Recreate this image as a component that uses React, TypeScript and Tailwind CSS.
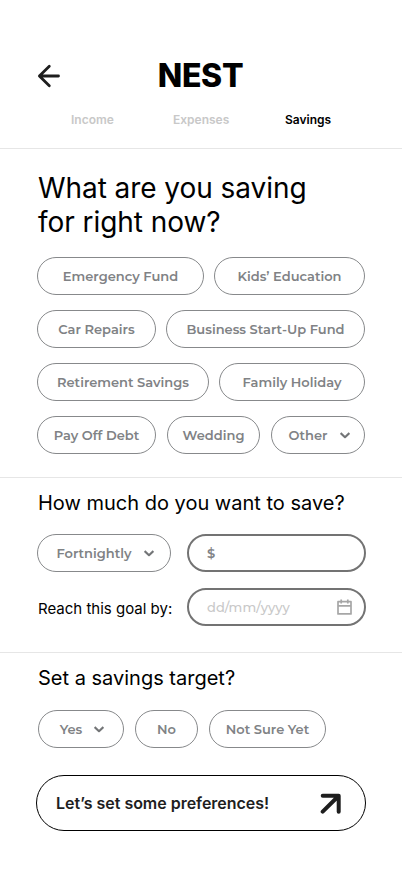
import { useState } from 'react'
import clsx from 'clsx'

type Option = {
  label: string
  className: string
  menu?: boolean
}

const goalRows: Option[][] = [
  [
    { label: 'Emergency Fund', className: 'w-[167px]' },
    { label: 'Kids’ Education', className: 'w-[151px]' },
  ],
  [
    { label: 'Car Repairs', className: 'w-[119px]' },
    { label: 'Business Start-Up Fund', className: 'w-[199px]' },
  ],
  [
    { label: 'Retirement Savings', className: 'w-[172px]' },
    { label: 'Family Holiday', className: 'w-[146px]' },
  ],
  [
    { label: 'Pay Off Debt', className: 'w-[119px]' },
    { label: 'Wedding', className: 'w-[93px]' },
    { label: 'Other', className: 'w-[94px]', menu: true },
  ],
]

const targetOptions: Option[] = [
  { label: 'Yes', className: 'w-[86px]', menu: true },
  { label: 'No', className: 'w-[63px]' },
  { label: 'Not Sure Yet', className: 'w-[117px]' },
]

function Chevron() {
  return (
    <svg width="10" height="7" viewBox="0 0 10 7" fill="none" stroke="#737577" strokeWidth="2.1">
      <path d="M0.6 1 5 5.2 9.4 1" strokeLinejoin="round" />
    </svg>
  )
}

function Pill({ option, selected, onClick }: { option: Option; selected?: boolean; onClick?: () => void }) {
  return (
    <button
      type="button"
      aria-pressed={selected}
      onClick={onClick}
      className={clsx(
        'flex h-[38px] shrink-0 items-center justify-center rounded-full border border-[#87898b] font-[Montserrat,Inter,sans-serif] text-[13px] font-semibold whitespace-nowrap text-[#808285]',
        option.menu && 'gap-3 pl-0.5',
        selected && 'bg-gray-100',
        option.className,
      )}
    >
      <span className="pt-px">{option.label}</span>
      {option.menu && <Chevron />}
    </button>
  )
}

export default function App() {
  const [goal, setGoal] = useState('')
  const [target, setTarget] = useState('')

  return (
    <div className="mx-auto h-[874px] w-[402px] overflow-hidden bg-white font-[Inter,sans-serif] text-black">
      {/* Header */}
      <header className="h-[149px] border-b border-[#e6e6e6] pt-[56px]">
        <div className="grid h-10 grid-cols-[1fr_auto_1fr] items-center px-[37px]">
          <button type="button" aria-label="Back" className="w-6">
            <svg width="24" height="24" viewBox="0 0 24 24" fill="none" stroke="#1e1e1e" strokeWidth="2.8" strokeLinecap="round" strokeLinejoin="round">
              <path d="M21.5 12H2.5M12.3 2.2 2.4 12l9.9 9.8" />
            </svg>
          </button>
          <h1 className="pr-px text-[32px] leading-10 font-extrabold tracking-[-0.3px]">NEST</h1>
        </div>
        <nav className="mt-[15px] flex pl-[71px] text-xs leading-[18px] font-semibold text-[#c8c8c8]">
          <a className="w-[102px]">Income</a>
          <a className="w-[112px]">Expenses</a>
          <a className="text-black">Savings</a>
        </nav>
      </header>

      {/* Savings goals */}
      <section className="h-[329px] border-b border-[#e6e6e6] px-[37px] pt-[22px]">
        <h2 className="pl-px text-[28px] leading-[34px] tracking-[-0.06px]">
          What are you saving
          <br />
          for right now?
        </h2>
        <div className="mt-[18px] flex w-[328px] flex-col gap-[15px]">
          {goalRows.map((row) => (
            <div key={row[0].label} className="flex justify-between">
              {row.map((option) => (
                <Pill
                  key={option.label}
                  option={option}
                  selected={goal === option.label}
                  onClick={() => setGoal(option.label)}
                />
              ))}
            </div>
          ))}
        </div>
      </section>

      {/* Amount and date */}
      <section className="h-[175px] border-b border-[#e6e6e6] px-9 pt-[11px]">
        <h3 className="pl-0.5 text-xl leading-7">How much do you want to save?</h3>
        <div className="mt-[17px] flex gap-4 pl-px">
          <Pill option={{ label: 'Fortnightly', className: 'w-[134px]', menu: true }} />
          <div className="flex h-[38px] w-[179px] shrink-0 items-center rounded-full border-2 border-[#737373] pt-px pl-[18px] font-[Montserrat,Inter,sans-serif] text-[13px] font-semibold text-[#808285]">
            $
          </div>
        </div>
        <div className="mt-4 flex items-center pl-px">
          <p className="w-[150px] pt-1 pl-px text-[15px]">Reach this goal by:</p>
          <div className="flex h-[38px] w-[179px] shrink-0 items-center justify-between rounded-full border-2 border-[#737373] pr-3 pl-[18px] font-[Montserrat,Inter,sans-serif] text-[13px] font-medium text-[#c8c8c8]">
            <span className="pt-px tracking-[0.05px]">dd/mm/yyyy</span>
            <svg width="15" height="16" viewBox="0 0 15 16" fill="none" stroke="#a6a6a6" strokeWidth="1.7" strokeLinejoin="round">
              <path d="M1 2.7h13v12.2H1zM1 6.8h13M4.2.5v4M10.8.5v4" />
            </svg>
          </div>
        </div>
      </section>

      {/* Target */}
      <section className="px-9 pt-[11px]">
        <h3 className="pl-0.5 text-xl leading-7">Set a savings target?</h3>
        <div className="mt-[18px] flex gap-[11px] pl-0.5">
          {targetOptions.map((option) => (
            <Pill
              key={option.label}
              option={option}
              selected={target === option.label}
              onClick={() => setTarget(option.label)}
            />
          ))}
        </div>
        <button
          type="button"
          className="mt-[27px] flex h-14 w-[330px] items-center justify-between rounded-full border border-black pr-6 pl-[19px] text-[16px] font-semibold text-[#1e1e1e]"
        >
          <span className="tracking-[-0.02px]">Let’s set some preferences!</span>
          <svg width="21" height="21" viewBox="0 0 21 21" fill="none" stroke="#1e1e1e" strokeWidth="4">
            <path d="M2.7 2.7h16v16M18.5 3 2.7 18.7" strokeLinecap="round" strokeLinejoin="round" />
          </svg>
        </button>
      </section>
    </div>
  )
}
